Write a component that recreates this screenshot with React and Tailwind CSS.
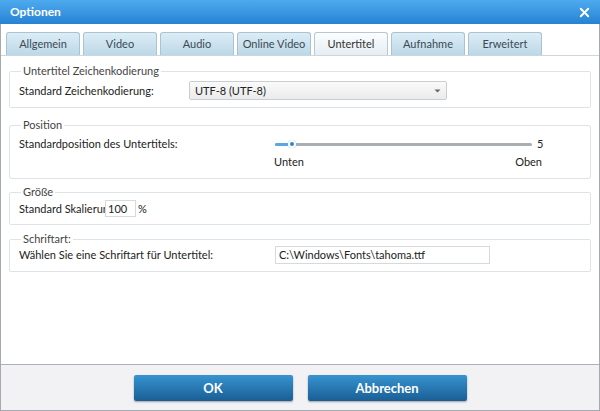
import { X } from 'lucide-react'

const tabs = ['Allgemein', 'Video', 'Audio', 'Online Video', 'Untertitel', 'Aufnahme', 'Erweitert']

function Group({ title, className, children }) {
    return (
        <fieldset className={`mx-2 border border-[#dde3e7] rounded-[2px] px-[9px] ${className}`}>
            <legend className="ml-[2px] px-[2px] text-[11px] leading-[14px] text-[#444]">{title}</legend>
            {children}
        </fieldset>
    )
}

export default function App() {
    return (
        <div className="w-[600px] h-[411px] flex flex-col bg-white text-[#222] text-[11px] leading-[14px]" style={{ fontFamily: 'Lato, "Open Sans", sans-serif' }}>
            <div className="h-[24px] shrink-0 flex items-center justify-between pl-[10px] pr-[8px] bg-gradient-to-b from-[#4eaaee] to-[#2683d4]">
                <span className="text-white font-bold text-[12px]">Optionen</span>
                <X className="w-[15px] h-[15px] text-white" strokeWidth={3} />
            </div>
            <div className="flex-1 flex flex-col border-x border-b border-[#a3abb0]">
                <div className="flex gap-[3px] pl-[5px] pt-[8px] border-b border-[#cdd6dc]">
                    {tabs.map(t => (
                        <div
                            key={t}
                            className={`w-[74px] h-[23px] flex items-center justify-center rounded-t-[3px] border border-b-0 text-[11px] ${t === 'Untertitel' ? 'bg-gradient-to-b from-[#fbfdfe] to-[#e6eef3] border-[#b9c7d0] text-[#333]' : 'bg-gradient-to-b from-[#dcedf6] to-[#bcd8e7] border-[#a9c3d3] text-[#3a4a55]'}`}
                        >
                            {t}
                        </div>
                    ))}
                </div>

                <Group title="Untertitel Zeichenkodierung" className="mt-[8px] pb-[7px]">
                    <div className="flex items-center pt-[3px]">
                        <span className="w-[170px]">Standard Zeichenkodierung:</span>
                        <div className="w-[258px] h-[19px] flex items-center justify-between px-[5px] border border-[#c8cdd1] rounded-[2px] bg-gradient-to-b from-[#fafafa] to-[#ebebeb]">
                            <span>UTF-8 (UTF-8)</span>
                            <svg width="7" height="4" viewBox="0 0 7 4"><path d="M0.5 0.5h6L3.5 3.5z" fill="#666" /></svg>
                        </div>
                    </div>
                </Group>

                <Group title="Position" className="mt-[10px] pb-[9px]">
                    <div className="flex items-center pt-[5px]">
                        <span className="w-[256px]">Standardposition des Untertitels:</span>
                        <div className="relative w-[257px] h-[14px] flex items-center">
                            <div className="w-full h-[3px] bg-[#a9aeb2] rounded-full" />
                            <div className="absolute left-0 w-[16px] h-[3px] bg-[#5aa7e4] rounded-full" />
                            <div className="absolute left-[13px] w-[8px] h-[8px] rounded-full bg-[#2b83d4] border-[2px] border-white shadow-[0_0_1px_#8aa]" />
                        </div>
                        <span className="ml-[5px]">5</span>
                    </div>
                    <div className="flex justify-between w-[268px] ml-[255px] mt-[4px]">
                        <span>Unten</span>
                        <span>Oben</span>
                    </div>
                </Group>

                <Group title="Größe" className="mt-[6px] pb-[7px]">
                    <div className="flex items-center pt-[1px]">
                        <span className="w-[86px] overflow-hidden whitespace-nowrap">Standard Skalierung:</span>
                        <div className="w-[31px] h-[17px] flex items-center pl-[2px] border border-[#d5dadd]">100</div>
                        <span className="ml-[2px]">%</span>
                    </div>
                </Group>

                <Group title="Schriftart:" className="mt-[7px] pb-[7px]">
                    <div className="flex items-center">
                        <span className="w-[256px]">Wählen Sie eine Schriftart für Untertitel:</span>
                        <div className="w-[215px] h-[18px] flex items-center pl-[3px] border border-[#d5dadd]">C:\Windows\Fonts\tahoma.ttf</div>
                    </div>
                </Group>

                <div className="flex-1" />
                <div className="h-[46px] flex items-center justify-center gap-[15px] border-t border-[#aab2b6] bg-[#f2f2f4]">
                    <button className="w-[159px] h-[26px] rounded-[2px] bg-gradient-to-b from-[#3794d0] to-[#1a5e95] text-white font-bold text-[13px] shadow-[0_1px_2px_rgba(0,0,0,0.35)]">OK</button>
                    <button className="w-[159px] h-[26px] rounded-[2px] bg-gradient-to-b from-[#3794d0] to-[#1a5e95] text-white font-bold text-[13px] shadow-[0_1px_2px_rgba(0,0,0,0.35)]">Abbrechen</button>
                </div>
            </div>
        </div>
    )
}
